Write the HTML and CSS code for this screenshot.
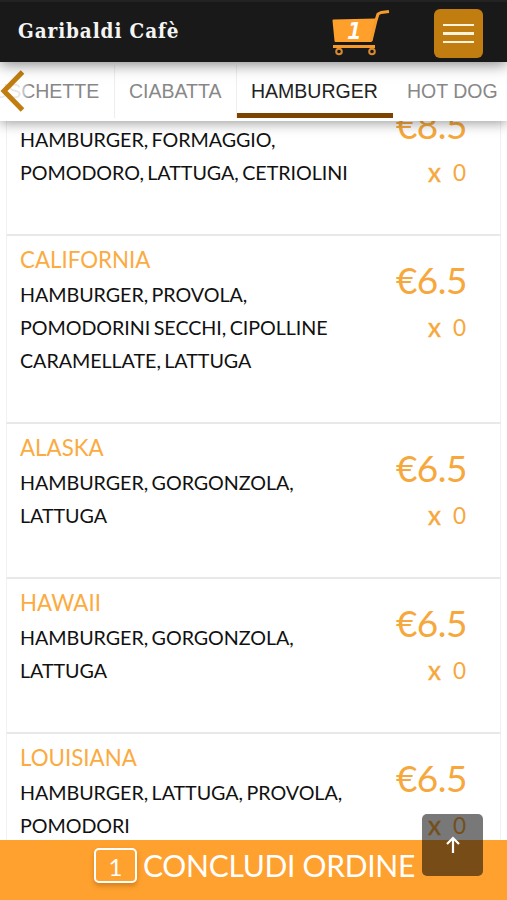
FILE: index.html
```
<!DOCTYPE html>
<html lang="it">
  <head>
    <meta charset="UTF-8" />
    <meta name="viewport" content="width=device-width, initial-scale=1.0" />
    <title>Garibaldi Cafè</title>
    <link rel="stylesheet" href="styles.css">
  </head>

  <body>
    <header class="topbar">
      <h1 class="brand">Garibaldi Cafè</h1>
      <a class="cart" href="#">
        <svg width="60" height="48" viewBox="0 0 60 48">
          <path class="basket" d="M2.5 12.5 L45 11.5 L40 33 H4.5 Z" />
          <path class="frame" d="M58 3.5 L50 4.5 L47 6 L45 12.5 L40 33 M2 38.5 H44" />
          <circle class="wheel" cx="8" cy="43.5" r="2.8" />
          <circle class="wheel" cx="41" cy="43.5" r="2.8" />
          <text class="cart-count" x="16.5" y="31">1</text>
        </svg>
      </a>
      <button class="menu">
        <span></span>
        <span></span>
        <span></span>
      </button>
    </header>

    <nav class="tabs">
      <a class="tab bruschette" href="#">BRUSCHETTE</a>
      <a class="tab ciabatta" href="#">CIABATTA</a>
      <a class="tab hamburger active" href="#">HAMBURGER</a>
      <a class="tab hotdog" href="#">HOT DOG</a>
      <div class="prev">
        <svg width="26" height="42" viewBox="0 0 26 42">
          <path d="M22.5 2 L4 21 L22.5 40" />
        </svg>
      </div>
    </nav>

    <main class="list">
      <article class="item">
        <div class="info">
          <h2 class="name"></h2>
          <p class="desc">HAMBURGER, FORMAGGIO,<br />POMODORO, LATTUGA, CETRIOLINI</p>
        </div>
        <div class="order">
          <p class="price">€8.5</p>
          <p class="qty"><b>x</b><span>0</span></p>
        </div>
      </article>

      <article class="item">
        <div class="info">
          <h2 class="name">CALIFORNIA</h2>
          <p class="desc">HAMBURGER, PROVOLA,<br />POMODORINI SECCHI, CIPOLLINE<br />CARAMELLATE, LATTUGA</p>
        </div>
        <div class="order">
          <p class="price">€6.5</p>
          <p class="qty"><b>x</b><span>0</span></p>
        </div>
      </article>

      <article class="item">
        <div class="info">
          <h2 class="name">ALASKA</h2>
          <p class="desc">HAMBURGER, GORGONZOLA,<br />LATTUGA</p>
        </div>
        <div class="order">
          <p class="price">€6.5</p>
          <p class="qty"><b>x</b><span>0</span></p>
        </div>
      </article>

      <article class="item">
        <div class="info">
          <h2 class="name">HAWAII</h2>
          <p class="desc">HAMBURGER, GORGONZOLA,<br />LATTUGA</p>
        </div>
        <div class="order">
          <p class="price">€6.5</p>
          <p class="qty"><b>x</b><span>0</span></p>
        </div>
      </article>

      <article class="item">
        <div class="info">
          <h2 class="name">LOUISIANA</h2>
          <p class="desc">HAMBURGER, LATTUGA, PROVOLA,<br />POMODORI</p>
        </div>
        <div class="order">
          <p class="price">€6.5</p>
          <p class="qty"><b>x</b><span>0</span></p>
        </div>
      </article>
    </main>

    <footer class="checkout">
      <span class="badge">1</span>
      <span class="label">CONCLUDI ORDINE</span>
    </footer>

    <button class="to-top">
      <svg width="16" height="18" viewBox="0 0 16 18">
        <path d="M8 17 V2 M2 8 L8 2 L14 8" />
      </svg>
    </button>
  </body>
</html>
```
FILE: styles.css
```
* {
  box-sizing: border-box;
}

body {
  display: flex;
  flex-direction: column;
  height: 900px;
  margin: 0;
  overflow: hidden;
  background: #fff;
  font-family: Lato, "Liberation Sans", sans-serif;
}

h1,
h2,
p {
  margin: 0;
  font-weight: normal;
}

button {
  border: 0;
  padding: 0;
}

svg {
  display: block;
  fill: none;
}

.topbar {
  display: flex;
  flex: none;
  align-items: center;
  height: 62px;
  padding: 0 24px 0 18px;
  background: #191919;
  border-top: 2px solid #222;
  box-shadow: 0 2px 14px rgba(0, 0, 0, 0.5);
  position: relative;
  z-index: 3;
}

.brand {
  flex: 1;
  padding-bottom: 2px;
  color: #f4f4f4;
  font: bold 20.5px "DejaVu Serif Condensed", "DejaVu Serif", serif;
  letter-spacing: 0.9px;
}

.cart {
  margin-right: 43px;
}

.basket {
  fill: #ff9f2c;
  stroke: #ff9f2c;
  stroke-width: 2;
  stroke-linejoin: round;
}

.frame {
  stroke: #f79a2c;
  stroke-width: 3;
  stroke-linejoin: round;
}

.wheel {
  stroke: #d98a30;
  stroke-width: 2;
}

.cart-count {
  fill: #fff;
  font: italic bold 23px "DejaVu Sans Mono", monospace;
}

.menu {
  display: flex;
  flex-direction: column;
  align-items: center;
  justify-content: center;
  gap: 6px;
  width: 49px;
  height: 49px;
  margin-top: 3px;
  border-radius: 6px;
  background: #c17d10;
}

.menu span {
  width: 31px;
  height: 2.5px;
  background: #fff3dc;
}

.tabs {
  display: flex;
  flex: none;
  height: 59px;
  padding: 3px 0;
  background: #fff;
  box-shadow: 0 2px 12px rgba(0, 0, 0, 0.4);
  position: relative;
  z-index: 2;
}

.tab {
  flex: none;
  padding-left: 14px;
  border-right: 1px solid #eee;
  color: #888;
  font: 19.5px/53px "Liberation Sans", sans-serif;
  text-decoration: none;
  white-space: nowrap;
}

.bruschette {
  width: 162px;
  margin-left: -47px;
}

.ciabatta {
  width: 122px;
}

.hamburger {
  width: 156px;
}

.hotdog {
  width: 120px;
}

.active {
  color: #222;
  border-right: 0;
  border-bottom: 5px solid #7d4300;
}

/* fades the tabs out under the back arrow */
.prev {
  position: absolute;
  left: 0;
  top: 0;
  width: 30px;
  height: 59px;
  padding-top: 8px;
  background: linear-gradient(to right, rgba(255, 255, 255, 0.8) 65%, rgba(255, 255, 255, 0));
}

.prev path {
  stroke: #c17d10;
  stroke-width: 5;
}

.list {
  flex: 1;
  min-height: 0;
  overflow: hidden;
  padding: 0 6px;
}

.item {
  display: flex;
  justify-content: space-between;
  padding: 7px 33px 44.5px 13px;
  border: 1px solid #f1f1f1;
  border-top: 0;
  border-bottom: 2px solid #e8e8e8;
}

.item:first-child {
  margin-top: -40.5px;
}

.name {
  height: 35px;
  color: #fbab3f;
  font-size: 22.3px;
  line-height: 34px;
}

.desc {
  color: #111;
  font-size: 19.7px;
  line-height: 33.3px;
  word-spacing: -1.5px;
  letter-spacing: -0.05px;
}

.order {
  color: #f6a83d;
  text-align: right;
}

.price {
  padding-top: 13px;
  font-size: 37px;
  line-height: 48px;
  letter-spacing: -0.5px;
}

.qty {
  display: flex;
  align-items: center;
  justify-content: flex-end;
  gap: 12px;
  height: 38px;
  padding: 10px 1px 0 0;
  font-size: 22.5px;
  line-height: 28px;
}

.qty b {
  padding-bottom: 2px;
  font-size: 26px;
  font-weight: normal;
  -webkit-text-stroke: 0.4px #f6a83d;
}

.checkout {
  display: flex;
  flex: none;
  justify-content: center;
  gap: 6px;
  height: 60px;
  padding: 8px 0 0 2px;
  background: #ffa12f;
  color: #fff;
}

.badge {
  width: 43px;
  height: 35px;
  border: 2.5px solid #fff;
  border-radius: 5px;
  box-shadow: 0 3px 5px rgba(130, 70, 0, 0.35);
  font-size: 24px;
  line-height: 33px;
  text-align: center;
}

.label {
  font-size: 30px;
  line-height: 34px;
  letter-spacing: -0.3px;
}

.to-top {
  display: flex;
  align-items: center;
  justify-content: center;
  position: fixed;
  right: 24px;
  bottom: 24px;
  width: 61px;
  height: 62px;
  border-radius: 5px;
  background: rgba(0, 0, 0, 0.53);
}

.to-top path {
  stroke: #fff;
  stroke-width: 2.2;
}
```
